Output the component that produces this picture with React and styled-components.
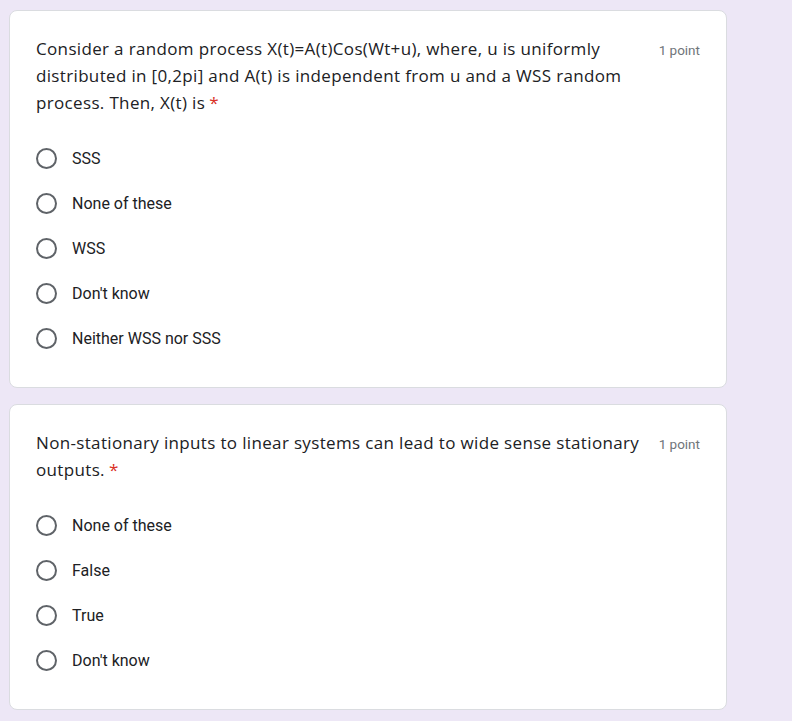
import styled, { createGlobalStyle } from "styled-components"

const GlobalStyle = createGlobalStyle`
    body {
        margin: 0;
        background: #ede7f6;
    }
`

const Page = styled.div`
    padding: 10px 0 10px 9px;
    display: flex;
    flex-direction: column;
    gap: 16px;
`

const Card = styled.div`
    width: 718px;
    box-sizing: border-box;
    background: #fff;
    border: 1px solid #dadce0;
    border-radius: 8px;
    padding: 24px 26px 26px 26px;
`

const Header = styled.div`
    display: flex;
    align-items: flex-start;
    gap: 12px;
    margin-bottom: ${props => props.gap || 18}px;
`

const Title = styled.div`
    flex: 1;
    font-family: "Open Sans", sans-serif;
    font-size: 17px;
    letter-spacing: 0.34px;
    line-height: 27px;
    color: #202124;
`

const Star = styled.span`
    color: #d93025;
    padding-left: 4px;
`

const Points = styled.div`
    font-family: Roboto, sans-serif;
    font-size: 13.5px;
    color: #70757a;
    line-height: 27px;
    padding-top: 2px;
    white-space: nowrap;
`

const Options = styled.div`
    display: flex;
    flex-direction: column;
`

const Option = styled.label`
    display: flex;
    align-items: center;
    height: 45px;
    gap: 15px;
    font-family: Roboto, sans-serif;
    font-size: 16px;
    color: #202124;
`

const Radio = styled.span`
    width: 21px;
    height: 21px;
    box-sizing: border-box;
    border: 2px solid #5f6368;
    border-radius: 50%;
    flex-shrink: 0;
`

const Question = ({ title, options, gap }) => (
    <Card>
        <Header gap={gap}>
            <Title>{title}<Star>*</Star></Title>
            <Points>1 point</Points>
        </Header>
        <Options>
            {options.map(o => (
                <Option key={o}>
                    <Radio />
                    {o}
                </Option>
            ))}
        </Options>
    </Card>
)

const App = () => {
    return (
        <Page>
            <GlobalStyle />
            <Question
                title="Consider a random process X(t)=A(t)Cos(Wt+u), where, u is uniformly distributed in [0,2pi] and A(t) is independent from u and a WSS random process. Then, X(t) is"
                options={["SSS", "None of these", "WSS", "Don't know", "Neither WSS nor SSS"]}
                gap={20}
            />
            <Question
                title="Non-stationary inputs to linear systems can lead to wide sense stationary outputs."
                options={["None of these", "False", "True", "Don't know"]}
                gap={20}
            />
        </Page>
    )
}

export default App
